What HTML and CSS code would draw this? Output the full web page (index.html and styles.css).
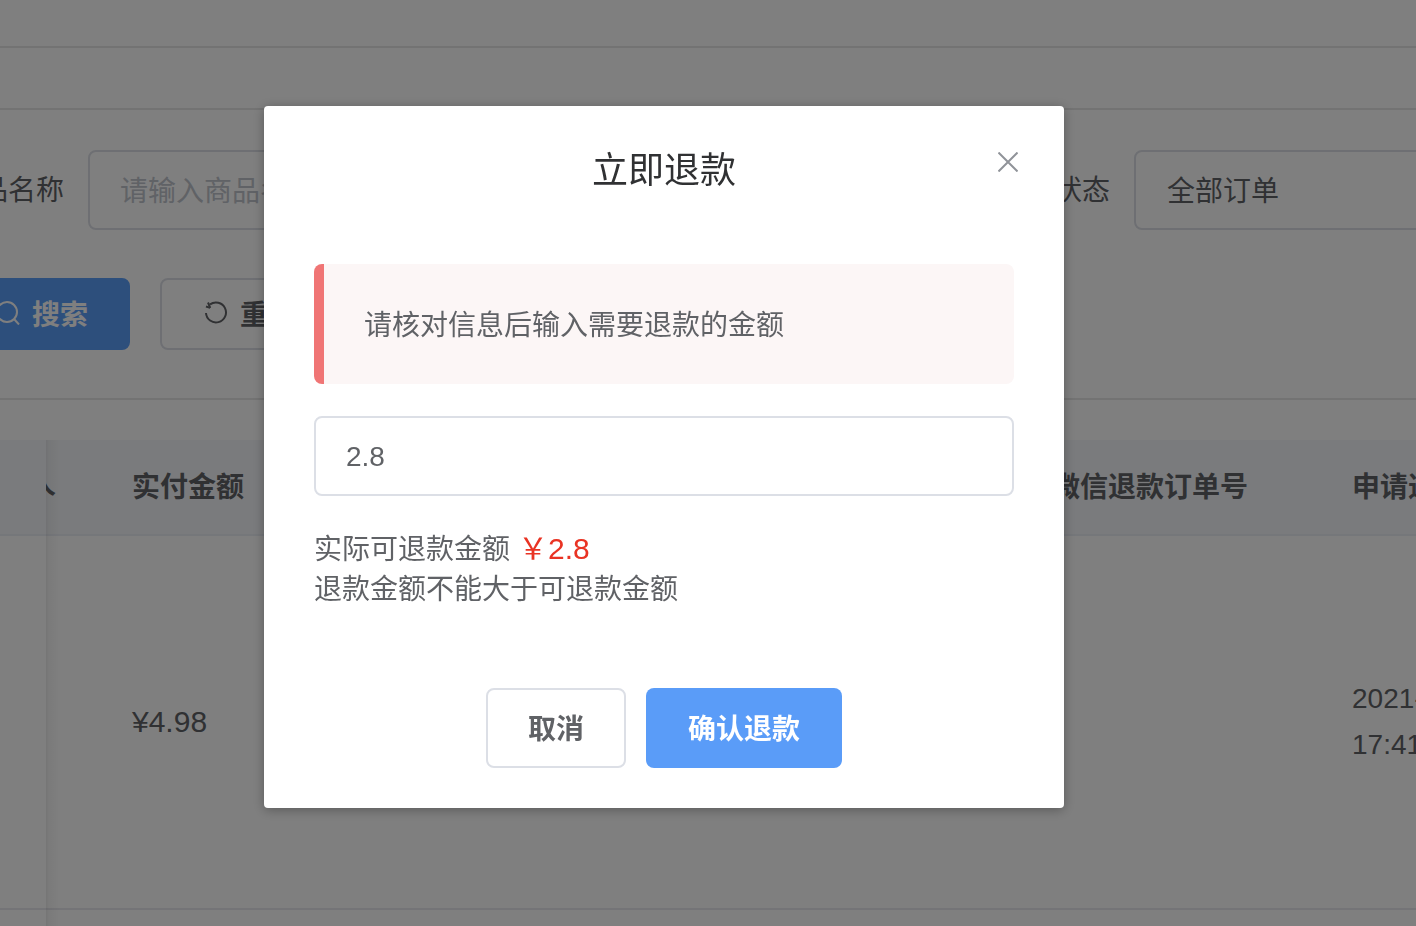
FILE: index.html
```html
<!DOCTYPE html>
<html lang="zh-CN">
<head>
<meta charset="utf-8">
<title>立即退款</title>
<link rel="stylesheet" href="styles.css">
</head>
<body>
<div class="page">
  <div class="topbar"></div>
  <div class="tabbar"></div>
  <section class="filters">
    <div class="filter-row">
      <label class="filter-label filter-label-name">商品名称</label>
      <div class="field field-name placeholder">请输入商品名称</div>
      <label class="filter-label filter-label-status">订单状态</label>
      <div class="field field-status">全部订单</div>
    </div>
    <div class="action-row">
      <button class="btn btn-search">
        <svg class="btn-icon" viewBox="0 0 24 24" fill="none" stroke="currentColor" stroke-width="2"><circle cx="11" cy="11" r="10"/><path d="M18 18l5 5.5"/></svg>
        搜索
      </button>
      <button class="btn btn-reset">
        <svg class="btn-icon" viewBox="0 0 24 24" fill="none" stroke="currentColor" stroke-width="2"><path d="M6 3.4A10 10 0 1 1 2 12"/><path d="M4 1.5l2.2 5.4"/><path d="M2 5.5l4.2 1.4"/></svg>
        重置
      </button>
    </div>
  </section>
  <section class="table">
    <div class="frozen"></div>
    <div class="row row-head">
      <div class="cell cell-a"><span class="tail">人</span></div>
      <div class="cell cell-b">实付金额</div>
      <div class="cell cell-c">微信退款订单号</div>
      <div class="cell cell-d">申请退款时间</div>
    </div>
    <div class="row row-body">
      <div class="cell cell-a"></div>
      <div class="cell cell-b cell-money">¥4.98</div>
      <div class="cell cell-c"></div>
      <div class="cell cell-d"><span class="stamp">2021-03-12<br>17:41:26</span></div>
    </div>
  </section>
</div>

<div class="overlay">
  <div class="dialog">
    <button class="close" aria-label="关闭">
      <svg viewBox="0 0 20 20" fill="none" stroke="currentColor" stroke-width="2"><path d="M0.5 0.5l19 19M19.5 0.5l-19 19"/></svg>
    </button>
    <h2 class="dialog-title">立即退款</h2>
    <div class="alert">请核对信息后输入需要退款的金额</div>
    <div class="amount">2.8</div>
    <p class="note"><span class="note-line">实际可退款金额<span class="price">￥2.8</span></span><span class="note-line">退款金额不能大于可退款金额</span></p>
    <div class="dialog-footer">
      <button class="btn-cancel">取消</button>
      <button class="btn-confirm">确认退款</button>
    </div>
  </div>
</div>
</body>
</html>
```
FILE: styles.css
```css
* { box-sizing: border-box; }
html, body { margin: 0; height: 100%; overflow: hidden; }
body {
  background: #fff;
  color: #606266;
  font-family: "Liberation Sans", "Noto Sans CJK SC", sans-serif;
  font-size: 28px;
}
button { font-family: inherit; cursor: pointer; }

.page { width: 1416px; height: 926px; overflow: hidden; }
.topbar { height: 48px; border-bottom: 2px solid #e6e6e6; }
.tabbar { height: 62px; border-bottom: 2px solid #e6e6e6; }

.filters { height: 290px; border-bottom: 2px solid #e6e6e6; padding-top: 40px; margin-bottom: 40px; }
.filter-row { display: flex; align-items: center; margin-left: -48px; height: 80px; width: 1800px; }
.filter-label { width: 112px; white-space: nowrap; flex: none; padding-bottom: 4px; }
.filter-label-name { margin-right: 24px; }
.filter-label-status { margin-left: 400px; margin-right: 24px; }
.field {
  flex: none;
  height: 80px;
  line-height: 80px;
  border: 2px solid #dcdfe6;
  border-radius: 8px;
  padding: 0 31px;
}
.field-name { width: 510px; padding-left: 30px; }
.field-status { width: 500px; }
.placeholder { color: #c0c4cc; }

.action-row { display: flex; gap: 30px; margin: 48px 0 0 -48px; }
.btn {
  display: flex;
  align-items: center;
  justify-content: center;
  gap: 12px;
  height: 72px;
  font-size: 28px;
  font-weight: 700;
  border-radius: 8px;
  padding: 0 0 2px;
  white-space: nowrap;
}
.btn-icon { width: 24px; height: 24px; flex: none; }
.btn-search { width: 178px; padding-left: 2px; background: #5a9ef8; border: 2px solid #5a9ef8; color: #fff; }
.btn-reset { width: 180px; background: #fff; border: 2px solid #dcdfe6; color: #606266; }

.table { position: relative; }
.frozen {
  position: absolute;
  left: 46px;
  top: 0;
  width: 14px;
  height: 486px;
  background: linear-gradient(to right, rgba(0, 0, 0, .08), rgba(0, 0, 0, .04) 20%, rgba(0, 0, 0, 0));
  z-index: 1;
}
.row { display: flex; align-items: center; }
.row-head { height: 96px; padding-bottom: 4px; background: #f5f7fa; border-bottom: 2px solid #ebeef5; font-weight: 700; }
.row-body { height: 374px; border-bottom: 2px solid #e8e8ee; }
.cell { flex: none; white-space: nowrap; }
.cell-a { width: 132px; position: relative; height: 100%; }
.cell-b { width: 920px; }
.cell-c { width: 300px; }
.cell-d { width: 300px; }
.cell-money { font-size: 30px; }
.tail {
  display: block;
  position: absolute;
  left: 46px;
  top: 0;
  width: 10px;
  height: 90px;
  overflow: hidden;
  line-height: 90px;
  text-indent: -18px;
}
.stamp { display: block; line-height: 46px; }

.overlay {
  position: fixed;
  inset: 0;
  background: rgba(0, 0, 0, .5);
  z-index: 10;
}
.dialog {
  position: relative;
  width: 800px;
  height: 702px;
  margin: 106px 0 0 264px;
  background: #fff;
  border-radius: 4px;
  box-shadow: 0 2px 12px rgba(0, 0, 0, .3);
  padding: 0 50px;
}
.close {
  position: absolute;
  top: 46px;
  right: 46px;
  width: 20px;
  height: 20px;
  padding: 0;
  border: 0;
  background: none;
  color: #909399;
}
.close svg { display: block; width: 20px; height: 20px; }
.dialog-title {
  margin: 0;
  height: 158px;
  padding-top: 42px;
  line-height: 46px;
  text-align: center;
  font-size: 36px;
  font-weight: 400;
  color: #303133;
}
.alert {
  height: 120px;
  line-height: 124px;
  padding-left: 40px;
  background: #fcf6f6;
  border-left: 10px solid #f07575;
  border-radius: 8px;
}
.amount {
  height: 80px;
  margin-top: 32px;
  line-height: 78px;
  padding-left: 30px;
  border: 2px solid #dcdfe6;
  border-radius: 8px;
}
.note { margin: 34px 0 0; }
.note-line { display: block; height: 40px; line-height: 40px; }
.price { color: #e93323; margin-left: 8px; font-size: 30px; line-height: 1; }
.dialog-footer { display: flex; justify-content: center; gap: 20px; margin-top: 78px; }
.btn-cancel, .btn-confirm {
  height: 80px;
  font-size: 28px;
  font-weight: 700;
  border-radius: 8px;
  padding: 0 0 2px;
}
.btn-cancel { width: 140px; background: #fff; border: 2px solid #dcdfe6; color: #606266; }
.btn-confirm { width: 196px; background: #5a9cf8; border: 0; color: #fff; }
```
